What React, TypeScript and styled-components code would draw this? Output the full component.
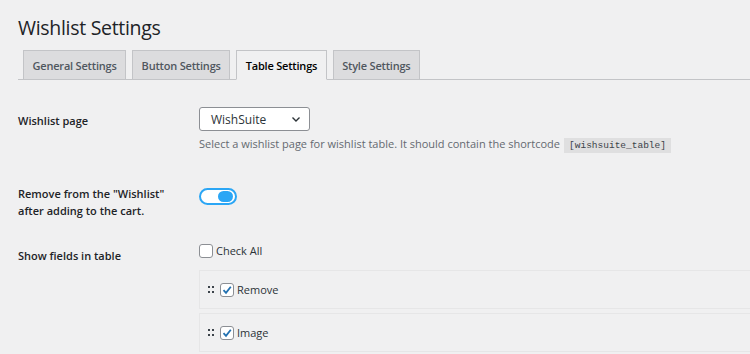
import React, { useState } from "react";
import styled, { createGlobalStyle } from "styled-components";

const GlobalStyle = createGlobalStyle`
  html, body {
    margin: 0;
    padding: 0;
    background: #f0f0f1;
    font-family: "Open Sans", "Noto Sans", sans-serif;
    color: #1d2327;
    overflow: hidden;
  }
`;

const Page = styled("div")`
  padding: 12px 0 0 18px;
  width: 732px;
  height: 342px;
  overflow: hidden;
`;

const Title = styled("h1")`
  margin: 0;
  font-size: 19.5px;
  font-weight: 400;
  line-height: 32px;
  letter-spacing: -0.3px;
  color: #1d2327;
`;

const TabBar = styled("div")`
  display: flex;
  gap: 6px;
  margin-top: 6px;
  padding-left: 5px;
  border-bottom: 1px solid #c3c4c7;
  height: 29px;
`;

const Tab = styled("div")<{ $active?: boolean }>`
  display: flex;
  align-items: center;
  padding: 0 8.5px;
  height: 28px;
  border: 1px solid #c3c4c7;
  border-bottom: ${(p) => (p.$active ? "1px solid #f0f0f1" : "none")};
  background: ${(p) => (p.$active ? "#f0f0f1" : "#dcdcde")};
  color: ${(p) => (p.$active ? "#000" : "#50575e")};
  font-size: 11px;
  font-weight: 600;
  letter-spacing: -0.2px;
  margin-bottom: ${(p) => (p.$active ? "-1px" : "0")};
`;

const Form = styled("div")`
  display: grid;
  grid-template-columns: 181px 1fr;
  margin-top: 27px;
`;

const Label = styled("div")<{ $top: number }>`
  padding-top: ${(p) => p.$top}px;
  font-size: 11px;
  font-weight: 600;
  line-height: 17px;
  color: #1d2327;
`;

const Field = styled("div")<{ $bottom: number }>`
  padding-bottom: ${(p) => p.$bottom}px;
`;

const Select = styled("div")`
  display: flex;
  align-items: center;
  justify-content: space-between;
  box-sizing: border-box;
  width: 111px;
  height: 24px;
  padding: 0 8px 0 11px;
  background: #fff;
  border: 1px solid #8c8f94;
  border-radius: 3px;
  font-size: 12px;
  color: #2c3338;
`;

const Description = styled("p")`
  margin: 4px 0 0;
  font-size: 11px;
  line-height: 18px;
  color: #646970;
`;

const Code = styled("code")`
  margin-left: 4px;
  padding: 2px 5px;
  background: rgba(0, 0, 0, 0.07);
  font-family: "Liberation Mono", monospace;
  font-size: 9.5px;
  color: #3c434a;
`;

const Toggle = styled("div")<{ $on: boolean }>`
  display: flex;
  align-items: center;
  justify-content: ${(p) => (p.$on ? "flex-end" : "flex-start")};
  box-sizing: border-box;
  width: 38px;
  height: 17px;
  padding: 0 2px;
  margin-top: 3px;
  border: 2px solid #2ba6f5;
  border-radius: 9px;
  background: #fff;
  cursor: pointer;
`;

const Knob = styled("span")`
  width: 15px;
  height: 11px;
  border-radius: 6px;
  background: #2ba6f5;
`;

const CheckRow = styled("label")`
  display: flex;
  align-items: center;
  gap: 3px;
  font-size: 11px;
  color: #2c3338;
  height: 17px;
`;

const Box = styled("span")`
  display: inline-flex;
  align-items: center;
  justify-content: center;
  box-sizing: border-box;
  width: 14px;
  height: 14px;
  border: 1px solid #8c8f94;
  border-radius: 3px;
  background: #fff;
`;

const FieldList = styled("div")`
  display: flex;
  flex-direction: column;
  gap: 4px;
  margin-top: 11px;
`;

const FieldItem = styled("div")`
  display: flex;
  align-items: center;
  gap: 6px;
  height: 39px;
  padding-left: 8px;
  border: 1px solid #e6e6e7;
  border-right: none;
  box-sizing: border-box;
  background: #f0f0f1;
`;

const Handle = styled("span")`
  display: grid;
  grid-template-columns: 2px 2px;
  gap: 3px 2px;
  width: 6px;
  & > i {
    width: 2px;
    height: 2px;
    background: #3c434a;
  }
`;

const Check = ({ checked }: { checked: boolean }) => (
  <Box>
    {checked && (
      <svg width="12" height="12" viewBox="0 0 12 12">
        <path
          d="M2.5 6.2 L5 8.8 L9.8 2.8"
          fill="none"
          stroke="#2271b1"
          strokeWidth="1.8"
        />
      </svg>
    )}
  </Box>
);

const Chevron = () => (
  <svg width="10" height="10" viewBox="0 0 10 10">
    <path d="M1.5 3.5 L5 7 L8.5 3.5" fill="none" stroke="#2c3338" strokeWidth="1.4" />
  </svg>
);

const tabs = ["General Settings", "Button Settings", "Table Settings", "Style Settings"];
const fields = ["Remove", "Image"];

const App = () => {
  const [removeOn, setRemoveOn] = useState(true);

  return (
    <>
      <GlobalStyle />
      <Page>
        <Title>Wishlist Settings</Title>
        <TabBar>
          {tabs.map((t) => (
            <Tab key={t} $active={t === "Table Settings"}>
              {t}
            </Tab>
          ))}
        </TabBar>

        <Form>
          <Label $top={5}>Wishlist page</Label>
          <Field $bottom={30}>
            <Select>
              WishSuite
              <Chevron />
            </Select>
            <Description>
              Select a wishlist page for wishlist table. It should contain the shortcode
              <Code>[wishsuite_table]</Code>
            </Description>
          </Field>

          <Label $top={0}>
            Remove from the "Wishlist"
            <br />
            after adding to the cart.
          </Label>
          <Field $bottom={37}>
            <Toggle $on={removeOn} onClick={() => setRemoveOn(!removeOn)}>
              <Knob />
            </Toggle>
          </Field>

          <Label $top={5}>Show fields in table</Label>
          <Field $bottom={0}>
            <CheckRow>
              <Check checked={false} />
              Check All
            </CheckRow>
            <FieldList>
              {fields.map((f) => (
                <FieldItem key={f}>
                  <Handle>
                    <i />
                    <i />
                    <i />
                    <i />
                  </Handle>
                  <CheckRow>
                    <Check checked />
                    {f}
                  </CheckRow>
                </FieldItem>
              ))}
            </FieldList>
          </Field>
        </Form>
      </Page>
    </>
  );
};

export default App;
